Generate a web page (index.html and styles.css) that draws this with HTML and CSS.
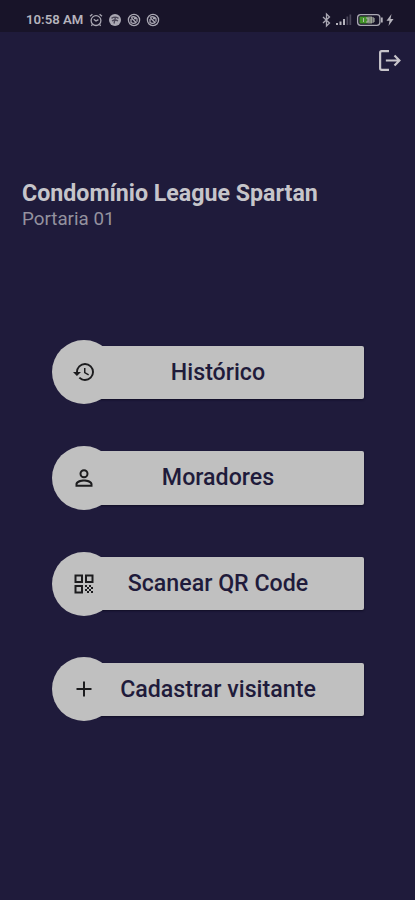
FILE: index.html
```html
<!DOCTYPE html>
<html lang="pt-BR">
<head>
<meta charset="utf-8">
<meta name="viewport" content="width=device-width, initial-scale=1">
<title>Portaria</title>
<link rel="stylesheet" href="styles.css">
</head>
<body>
<div class="status">
  <span class="time">10:58 AM</span>
  <svg class="s-icon" viewBox="0 0 14 14"><circle cx="7" cy="7.600" r="4.900"/><path d="M4.800 6.200 7 8l2.400-1.400M1 3.200 3.400 1.200M13 3.200 10.600 1.200M3.400 11.400 2.400 12.800M10.600 11.400l1 1.400"/></svg>
  <svg class="s-icon" viewBox="0 0 14 14"><circle class="disc" cx="7" cy="7" r="6"/><path class="dark" d="M3.500 5.400c2-1.400 5-1.400 7 0M4 8c2-1.300 4-1.300 6 0M6 10.500 7.500 4"/></svg>
  <svg class="s-icon" viewBox="0 0 14 14"><circle cx="7" cy="7" r="5.600"/><path d="M4 4.500c2-1.400 5-.8 6 1.200v3M4 6v3.500c1.500 1 3.600 1 5 0M4.500 5l5 5M7 5.500h2"/></svg>
  <svg class="s-icon" viewBox="0 0 14 14"><circle cx="7" cy="7" r="5.600"/><path d="M4 4.500c2-1.400 5-.8 6 1.200v3M4 6v3.500c1.500 1 3.600 1 5 0M4.500 5l5 5M7 5.500h2"/></svg>
  <svg class="system" viewBox="0 0 76 16">
    <path class="line" d="m3 5 6.500 6L6.500 14V2l3 3L3 11"/>
    <path class="bars" d="M16 11h2v2h-2zM19.500 9.500h2V13h-2zM23 7h2v6h-2z"/>
    <path class="faint" d="M26.500 4.500h1.700V13h-1.700zM29.500 2.500h1.700V13h-1.700z"/>
    <rect class="line" x="37.600" y="2.700" width="22.300" height="10.600" rx="3"/>
    <rect class="charge" x="39.500" y="4.500" width="8" height="7"/>
    <path class="level" d="M47.500 4.500H52v7h-4.500z"/>
    <path class="digits" d="M43.500 6v4M46 6h2v4h-2M51 6h3M51 8h3M51 10h3M54 6v4"/>
    <path class="bars" d="M61 5.500h1.700v5H61zM71.500 2 66.500 8.700h3L68.500 14l5-7h-3z"/>
  </svg>
</div>
<main class="screen">
  <div class="toolbar">
    <svg class="logout" viewBox="0 0 24 24"><path d="M11.500 3H4.500Q3 3 3 4.500v15Q3 21 4.500 21h7M8.500 12H21.500M16.800 7.200 21.500 12l-4.700 4.800"/></svg>
  </div>
  <header class="heading">
    <h1>Condomínio League Spartan</h1>
    <p>Portaria 01</p>
  </header>
  <nav class="menu">
    <a class="item">
      <span class="knob"><svg viewBox="0 0 24 24"><path d="M13 3a9 9 0 0 0-9 9H1l3.890 3.890.07.14L9 12H6c0-3.870 3.130-7 7-7s7 3.130 7 7-3.130 7-7 7c-1.930 0-3.680-.79-4.940-2.060l-1.420 1.420A8.950 8.950 0 0 0 13 21a9 9 0 0 0 0-18zm-1 5v5l4.280 2.540.72-1.210-3.500-2.080V8H12z"/></svg></span>
      <span class="label">Histórico</span>
    </a>
    <a class="item">
      <span class="knob"><svg viewBox="0 0 24 24"><path fill-rule="evenodd" d="M12 3.300a4.500 4.500 0 1 1 0 9 4.500 4.500 0 0 1 0-9zm0 2a2.500 2.500 0 1 0 0 5 2.500 2.500 0 0 0 0-5zM12 13.600c3.500 0 8.500 1.300 8.500 4.500v2.600h-17v-2.600c0-3.200 5-4.500 8.500-4.500zm0 2c-2.700 0-5.700 1-6.500 2.500v.6h13v-.6c-.8-1.500-3.800-2.500-6.500-2.500z"/></svg></span>
      <span class="label">Moradores</span>
    </a>
    <a class="item">
      <span class="knob"><svg viewBox="0 0 24 24"><path fill-rule="evenodd" d="M2.500 2.500H11V11H2.500zm2 2V9H9V4.500zM13 2.500h8.500V11H13zm2 2V9h4.500V4.500zM2.500 13H11v8.500H2.500zm2 2v4.500H9V15zM13 13h2v2h-2zm2 2h2v2h-2zm-2 2h2v2h-2zm2 2h2v2h-2zm2-2h2v2h-2zm2 2h2v2h-2zm-2-6h2v2h-2zm2 2h2v2h-2z"/></svg></span>
      <span class="label">Scanear QR Code</span>
    </a>
    <a class="item">
      <span class="knob"><svg viewBox="0 0 24 24"><path d="M19.500 13H13v6.500h-2V13H4.500v-2H11V4.500h2V11h6.500z"/></svg></span>
      <span class="label">Cadastrar visitante</span>
    </a>
  </nav>
</main>
</body>
</html>
```
FILE: styles.css
```css
* { box-sizing: border-box; }
body {
  margin: 0;
  height: 900px;
  overflow: hidden;
  background: #1f1b3b;
  font-family: Roboto, "Liberation Sans", sans-serif;
}
.status {
  display: flex;
  align-items: center;
  gap: 5px;
  height: 32px;
  padding: 7px 19px 0 26px;
  background: #181429;
  color: #b5b3bc;
}
.time { width: 58px; font-size: 13.2px; font-weight: 600; line-height: 16px; white-space: nowrap; }
.s-icon { width: 14px; height: 14px; fill: none; stroke: #aaa8b3; stroke-width: 1.3; }
.s-icon .disc { fill: #aaa8b3; stroke: none; }
.s-icon .dark { stroke: #4a4657; }
.system { width: 76px; height: 16px; margin-left: auto; }
.line { fill: none; stroke: #aaa8b3; stroke-width: 1.3; }
.bars { fill: #b5b3bc; }
.faint { fill: #4b475b; }
.charge { fill: #429329; }
.level { fill: #858d80; }
.digits { fill: none; stroke: #b4b9ae; stroke-width: 1; }
.toolbar { display: flex; justify-content: flex-end; padding: 16px 13px 0 0; }
.logout { width: 25px; height: 25px; fill: none; stroke: #c8c5cb; stroke-width: 2.1; }
.heading { padding: 106px 22px 0; }
h1 { margin: 0; color: #c6c5ca; font-size: 23.2px; font-weight: 700; line-height: 28px; white-space: nowrap; }
p { margin: 0; color: #94929f; font-size: 18.8px; line-height: 24px; }
.menu { display: grid; gap: 41.7px; padding: 109.3px 51px 0 52px; }
.item { display: flex; align-items: center; height: 64px; }
.knob {
  z-index: 1;
  display: flex;
  flex: none;
  align-items: center;
  justify-content: center;
  width: 64px;
  height: 64px;
  border-radius: 50%;
  background: #c0c0c0;
}
.knob svg { width: 24px; height: 24px; fill: #1c1c1e; }
.label {
  flex: 1;
  height: 53.5px;
  margin-left: -24px;
  padding-right: 20px;
  border-radius: 0 2px 2px 0;
  background: #c0c0c0;
  box-shadow: 0 1px 2px #110e26;
  color: #1f1b3b;
  font-size: 23.2px;
  font-weight: 500;
  line-height: 52.4px;
  text-align: center;
}
```
